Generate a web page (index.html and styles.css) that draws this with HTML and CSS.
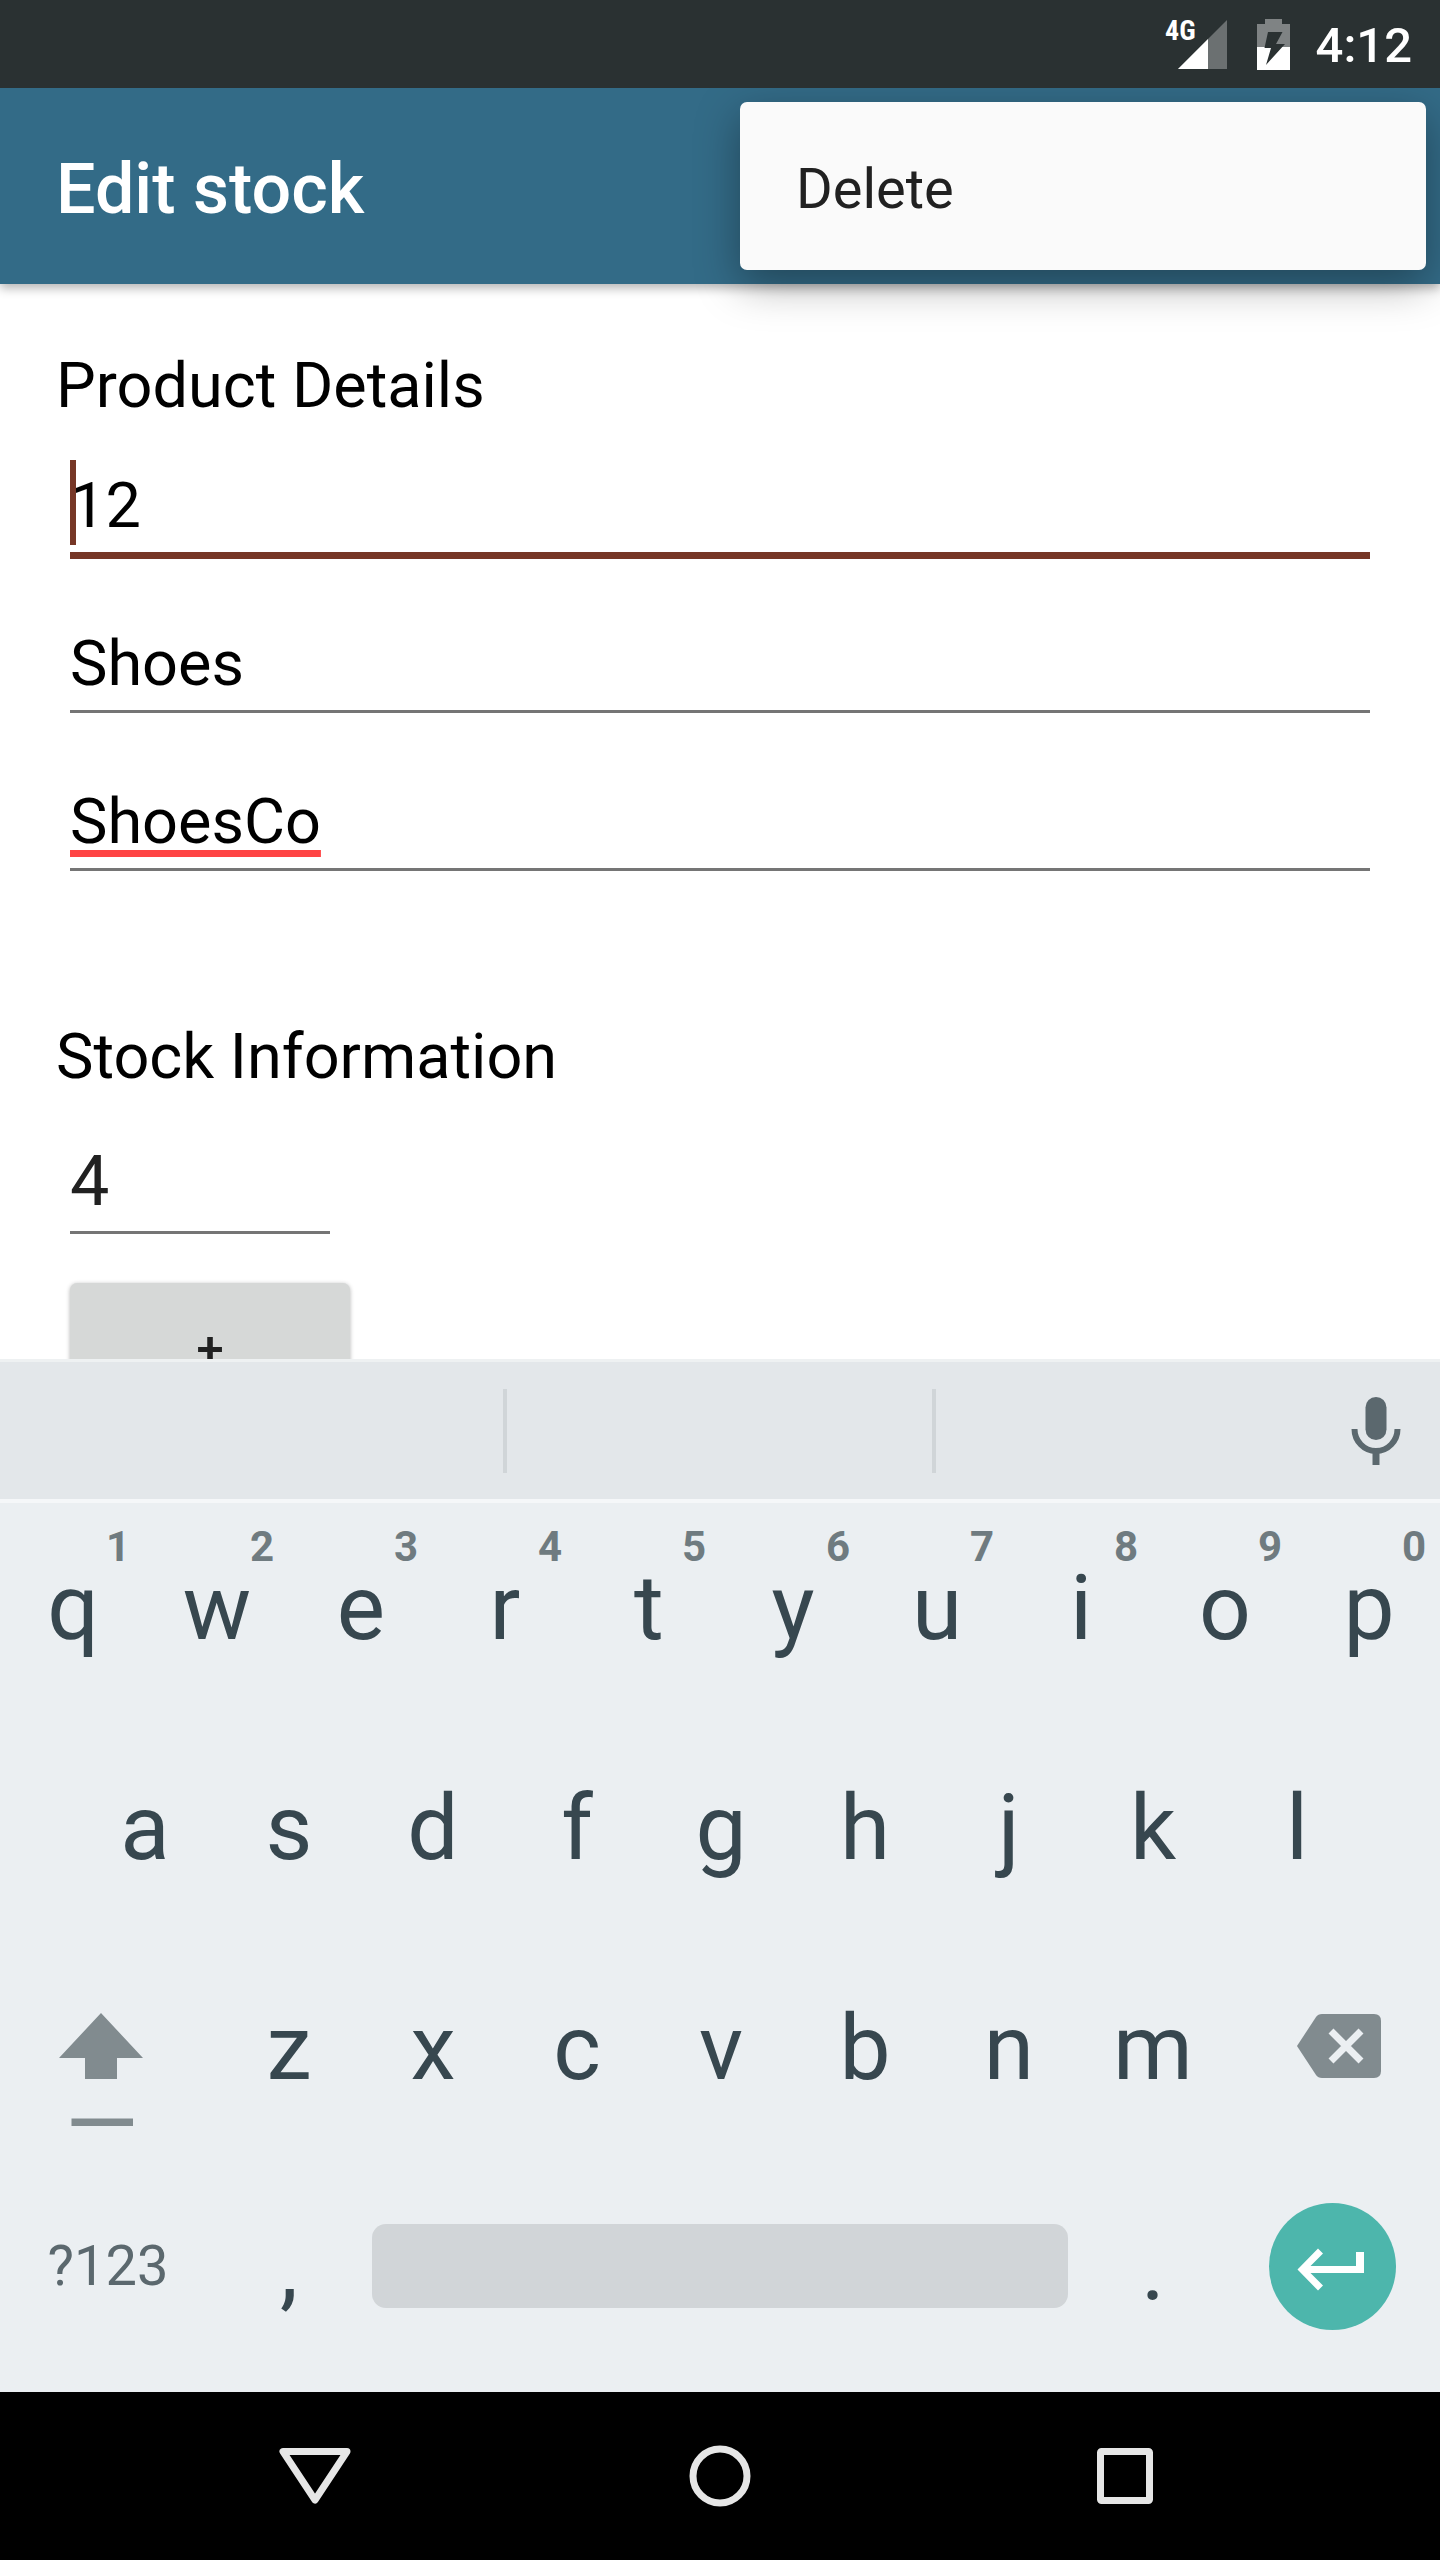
FILE: index.html
```html
<!DOCTYPE html>
<html lang="en">
<head>
<meta charset="utf-8">
<meta name="viewport" content="width=device-width, initial-scale=1">
<title>Edit stock</title>
<link rel="stylesheet" href="styles.css">
</head>
<body>
<div class="screen">
  <div class="status-bar">
    <div class="signal">
      <span class="network">4G</span>
      <svg class="signal-icon" viewBox="0 0 49 49" aria-hidden="true">
        <path d="M49 0V49H0Z" fill="#6b7071"/>
        <path d="M30 19V49H0Z" fill="#fff"/>
      </svg>
    </div>
    <svg class="battery-icon" viewBox="0 0 33 51" aria-hidden="true">
      <path d="M8 0H25V5H33V28H0V5H8Z" fill="#7f8384"/>
      <path d="M0 28H33V51H0Z" fill="#fff"/>
      <path d="M11 13H25.500L19 25H28L9 46L14 29H7.500Z" fill="#2a3132"/>
    </svg>
    <span class="clock">4:12</span>
  </div>

  <header class="app-bar">
    <h1 class="app-title">Edit stock</h1>
    <div class="menu" role="menu">
      <button class="menu-item" type="button" role="menuitem">Delete</button>
    </div>
  </header>

  <main class="content">
    <form class="form">
      <section class="section">
        <h2 class="section-title">Product Details</h2>
        <div class="field field-focused">
          <input class="input" type="text" value="12" aria-label="Product code" spellcheck="false">
          <span class="caret"></span>
        </div>
        <div class="field">
          <input class="input" type="text" value="Shoes" aria-label="Product name" spellcheck="false">
        </div>
        <div class="field">
          <input class="input input-misspelled" type="text" value="ShoesCo" aria-label="Supplier" spellcheck="false">
        </div>
      </section>
      <section class="section">
        <h2 class="section-title">Stock Information</h2>
        <div class="field field-quantity">
          <input class="input input-quantity" type="text" value="4" aria-label="Quantity">
        </div>
        <button class="step-button" type="button">+</button>
      </section>
    </form>
  </main>

  <div class="keyboard">
    <div class="suggestions">
      <button class="suggestion" type="button" aria-label="Suggestion 1"></button>
      <span class="divider"></span>
      <button class="suggestion" type="button" aria-label="Suggestion 2"></button>
      <span class="divider"></span>
      <button class="suggestion suggestion-voice" type="button" aria-label="Voice input">
        <svg class="mic-icon" viewBox="0 0 50 68" aria-hidden="true">
          <rect x="14.500" y="0" width="21" height="43" rx="10.500" fill="#5b686e"/>
          <path d="M3.500 32C3.500 44 13 54 25 54S46.500 44 46.500 32" fill="none" stroke="#5b686e" stroke-width="6"/>
          <path d="M21.500 54H28.500V68H21.500Z" fill="#5b686e"/>
        </svg>
      </button>
    </div>
    <div class="keys">
      <div class="key-row">
        <button class="key" type="button">q<span class="hint">1</span></button>
        <button class="key" type="button">w<span class="hint">2</span></button>
        <button class="key" type="button">e<span class="hint">3</span></button>
        <button class="key" type="button">r<span class="hint">4</span></button>
        <button class="key" type="button">t<span class="hint">5</span></button>
        <button class="key" type="button">y<span class="hint">6</span></button>
        <button class="key" type="button">u<span class="hint">7</span></button>
        <button class="key" type="button">i<span class="hint">8</span></button>
        <button class="key" type="button">o<span class="hint">9</span></button>
        <button class="key" type="button">p<span class="hint">0</span></button>
      </div>
      <div class="key-row key-row-inset">
        <button class="key" type="button">a</button>
        <button class="key" type="button">s</button>
        <button class="key" type="button">d</button>
        <button class="key" type="button">f</button>
        <button class="key" type="button">g</button>
        <button class="key" type="button">h</button>
        <button class="key" type="button">j</button>
        <button class="key" type="button">k</button>
        <button class="key" type="button">l</button>
      </div>
      <div class="key-row">
        <button class="key key-wide key-shift" type="button" aria-label="Shift">
          <svg class="shift-icon" viewBox="0 0 84 114" aria-hidden="true">
            <path d="M42 0L84 45H58V66H26V45H0Z" fill="#818b8f"/>
            <path d="M12.500 105.500H74V113H12.500Z" fill="#818b8f"/>
          </svg>
        </button>
        <button class="key" type="button">z</button>
        <button class="key" type="button">x</button>
        <button class="key" type="button">c</button>
        <button class="key" type="button">v</button>
        <button class="key" type="button">b</button>
        <button class="key" type="button">n</button>
        <button class="key" type="button">m</button>
        <button class="key key-wide key-backspace" type="button" aria-label="Backspace">
          <svg class="backspace-icon" viewBox="0 0 84 64" aria-hidden="true">
            <path d="M0 32L19 3Q21 0 25 0H77Q84 0 84 7V57Q84 64 77 64H25Q21 64 19 61Z" fill="#818b8f"/>
            <path d="M34 17L64 47M64 17L34 47" stroke="#ebeff2" stroke-width="7" fill="none"/>
          </svg>
        </button>
      </div>
      <div class="key-row">
        <button class="key key-wide key-symbols" type="button">?123</button>
        <button class="key" type="button">,</button>
        <button class="key key-space" type="button" aria-label="Space"><span class="space-bar"></span></button>
        <button class="key" type="button">.</button>
        <button class="key key-wide key-enter" type="button" aria-label="Enter">
          <svg class="enter-icon" viewBox="0 0 127 127" aria-hidden="true">
            <circle cx="63.500" cy="63.500" r="63.500" fill="#4db6ac"/>
            <path d="M28.500 66.500L49 45.500L54 50.500L41.500 63H87V49H95V70H41.500L54 82.500L49 87.500Z" fill="#fff"/>
          </svg>
        </button>
      </div>
    </div>
  </div>

  <nav class="nav-bar">
    <button class="nav-button" type="button" aria-label="Back">
      <svg class="nav-icon" viewBox="0 0 72 62" aria-hidden="true">
        <path d="M4 6.500H68L36 55Z" fill="none" stroke="#e6e6e6" stroke-width="7" stroke-linejoin="round"/>
      </svg>
    </button>
    <button class="nav-button" type="button" aria-label="Home">
      <svg class="nav-icon" viewBox="0 0 72 62" aria-hidden="true">
        <circle cx="36" cy="31" r="27" fill="none" stroke="#e6e6e6" stroke-width="7"/>
      </svg>
    </button>
    <button class="nav-button" type="button" aria-label="Recent apps">
      <svg class="nav-icon" viewBox="0 0 72 62" aria-hidden="true">
        <rect x="11.500" y="6.500" width="49" height="49" rx="1" fill="none" stroke="#e6e6e6" stroke-width="7" stroke-linejoin="round"/>
      </svg>
    </button>
  </nav>
</div>
</body>
</html>
```
FILE: styles.css
```css
* {
  box-sizing: border-box;
}

body {
  margin: 0;
  background: #fff;
  font-family: Roboto, "Noto Sans", sans-serif;
}

button,
input {
  margin: 0;
  padding: 0;
  border: 0;
  border-radius: 0;
  background: none;
  color: inherit;
  font: inherit;
}

svg {
  display: block;
  flex: none;
}

.screen {
  display: flex;
  flex-direction: column;
  height: 100vh;
  overflow: hidden;
}

/* Status bar */

.status-bar {
  position: relative;
  z-index: 3;
  flex: none;
  display: flex;
  align-items: center;
  justify-content: flex-end;
  height: 88px;
  padding-right: 28px;
  background: #2a3132;
  color: #fff;
}

.signal {
  position: relative;
  margin-right: 30px;
}

.signal-icon {
  width: 49px;
  height: 49px;
}

.network {
  position: absolute;
  right: 31px;
  top: -5px;
  font-family: "Roboto Condensed", Roboto, sans-serif;
  font-size: 28px;
  font-weight: 700;
  line-height: 32px;
}

.battery-icon {
  width: 33px;
  height: 51px;
  margin-right: 26px;
}

.clock {
  padding-top: 4px;
  font-size: 49px;
  font-weight: 500;
  line-height: 58px;
}

/* App bar and its overflow menu */

.app-bar {
  position: relative;
  z-index: 2;
  flex: none;
  display: flex;
  align-items: center;
  height: 196px;
  padding: 6px 56px 0;
  background: #336b87;
  color: #fff;
  box-shadow: 0 4px 10px rgba(0, 0, 0, 0.3);
}

.app-title {
  margin: 0;
  font-size: 70px;
  font-weight: 500;
  line-height: 82px;
}

.menu {
  position: absolute;
  top: 14px;
  right: 14px;
  width: 686px;
  border-radius: 7px;
  background: #fafafa;
  box-shadow: 0 14px 44px rgba(0, 0, 0, 0.35);
}

.menu-item {
  width: 100%;
  height: 168px;
  padding: 6px 56px 0;
  color: #212121;
  font-size: 56px;
  line-height: 66px;
  text-align: left;
}

/* Form */

.content {
  flex: 1;
  min-height: 0;
  overflow: hidden;
}

.form {
  padding: 65px 56px 0;
}

.section {
  padding: 0 14px;
  margin-bottom: 149px;
}

.section-title {
  margin: 0 -14px;
  color: #000;
  font-size: 63px;
  font-weight: 400;
  line-height: 74px;
}

.field {
  position: relative;
  margin-bottom: 26px;
  padding: 46px 0 9px;
  border-bottom: 3px solid #757575;
}

.field:last-child {
  margin-bottom: 0;
}

.field-focused {
  margin-bottom: 22px;
  border-bottom: 7px solid #763626;
}

.field-quantity {
  width: 260px;
  margin-bottom: 49px;
}

.input {
  display: block;
  width: 100%;
  height: 74px;
  color: #000;
  font-size: 63px;
  line-height: 74px;
  outline: 0;
}

.input-misspelled {
  text-decoration: underline 7px #ff4444;
  text-decoration-skip-ink: none;
  text-underline-offset: 7px;
}

.input-quantity {
  height: 82px;
  color: #212121;
  font-size: 70px;
  line-height: 82px;
}

.caret {
  position: absolute;
  top: 37px;
  left: 0;
  width: 6px;
  height: 85px;
  background: #763626;
}

.step-button {
  display: block;
  width: 280px;
  height: 126px;
  padding-top: 6px;
  border-radius: 7px;
  background: #d6d8d7;
  box-shadow: 0 1px 4px rgba(0, 0, 0, 0.3);
  color: #212121;
  font-size: 49px;
  font-weight: 500;
}

/* Keyboard */

.keyboard {
  position: relative;
  flex: none;
  border-top: 3px solid #eef1f2;
  background: #ebeff2;
  color: #37474f;
}

.suggestions {
  display: grid;
  grid-template-columns: minmax(0, 503fr) 4px minmax(0, 425fr) 4px minmax(0, 504fr);
  align-items: center;
  height: 141px;
  border-bottom: 4px solid #f5f7f9;
  background: #e3e7ea;
}

.suggestion {
  height: 100%;
}

.suggestion-voice {
  display: flex;
  align-items: center;
  justify-content: flex-end;
  padding-right: 39px;
}

.divider {
  height: 84px;
  background: #d0d5d8;
}

.mic-icon {
  width: 50px;
  height: 68px;
}

.keys {
  padding: 3px 0 6px;
}

/* Every row sits on a grid of twenty half-key columns */
.key-row {
  display: grid;
  grid-template-columns: repeat(20, minmax(0, 1fr));
}

.key-row-inset {
  padding: 0 5%;
  grid-template-columns: repeat(18, minmax(0, 1fr));
}

.key {
  position: relative;
  grid-column: span 2;
  display: flex;
  align-items: center;
  justify-content: center;
  height: 220px;
  padding: 0 0 16px 2px;
  font-size: 91px;
  line-height: 106px;
}

.hint {
  position: absolute;
  top: 16px;
  right: 14px;
  color: #6f7b80;
  font-size: 42px;
  font-weight: 700;
  line-height: 50px;
}

.key-wide {
  grid-column: span 3;
  padding: 0 0 20px;
}

.key-shift {
  padding: 28px 14px 0 0;
}

.shift-icon {
  width: 84px;
  height: 114px;
}

.key-backspace {
  padding-left: 14px;
}

.backspace-icon {
  width: 84px;
  height: 64px;
}

.key-symbols {
  color: #5b686e;
  font-size: 56px;
  line-height: 66px;
}

.key-space {
  grid-column: span 10;
  padding: 0 12px 20px;
}

.space-bar {
  flex: 1;
  height: 84px;
  border-radius: 14px;
  background: #d1d5d8;
}

.enter-icon {
  width: 127px;
  height: 127px;
}

/* Navigation bar */

.nav-bar {
  flex: none;
  display: flex;
  height: 168px;
  padding: 0 112px;
  background: #000;
}

.nav-button {
  flex: 1;
  display: flex;
  align-items: center;
  justify-content: center;
}

.nav-icon {
  width: 72px;
  height: 62px;
}
```
